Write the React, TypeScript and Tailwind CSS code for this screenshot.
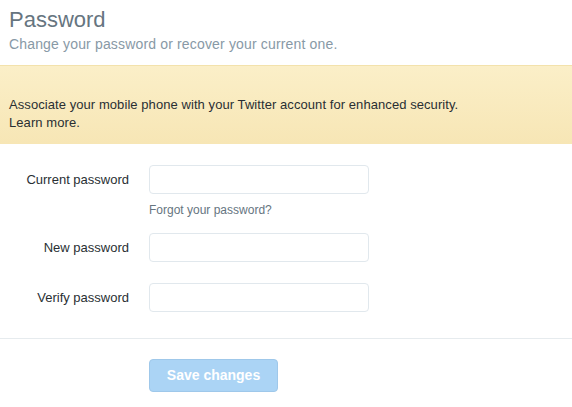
export default function App() {
  const font = { fontFamily: '"Liberation Sans", Arial, sans-serif' }

  return (
    <div className="w-[572px] h-[407px] bg-white overflow-hidden" style={font}>
      {/* Header */}
      <div className="pl-[9px] pt-[7px] pb-[12px]">
        <h1 className="text-[22px] leading-[26px] text-[#66757f]">Password</h1>
        <p className="mt-[2px] text-[14px] leading-[18px] tracking-[0.16px] text-[#8899a6]">
          Change your password or recover your current one.
        </p>
      </div>

      {/* Notice */}
      <div className="border-t border-[#f3e2ac] bg-gradient-to-b from-[#fbefc8] to-[#f7e6b5] pl-[9px] pt-[30px] pb-[12px] text-[13px] leading-[18px] tracking-[0.07px] text-[#292f33]">
        <p>Associate your mobile phone with your Twitter account for enhanced security.</p>
        <p>Learn more.</p>
      </div>

      {/* Form */}
      <div className="pt-[21px] pb-[26px] border-b border-[#e6ebee]">
        <div className="flex gap-[20px]">
          <label className="w-[129px] h-[29px] flex items-center justify-end text-[13px] text-[#292f33]">
            Current password
          </label>
          <div className="flex flex-col">
            <input type="password" className="w-[220px] h-[29px] rounded-[4px] border border-[#e1e8ed] bg-white outline-none" />
            <a className="mt-[8px] text-[12px] leading-[16px] text-[#66757f]">Forgot your password?</a>
          </div>
        </div>

        <div className="flex gap-[20px] mt-[15px]">
          <label className="w-[129px] h-[29px] flex items-center justify-end text-[13px] text-[#292f33]">
            New password
          </label>
          <input type="password" className="w-[220px] h-[29px] rounded-[4px] border border-[#e1e8ed] bg-white outline-none" />
        </div>

        <div className="flex gap-[20px] mt-[21px]">
          <label className="w-[129px] h-[29px] flex items-center justify-end text-[13px] text-[#292f33]">
            Verify password
          </label>
          <input type="password" className="w-[220px] h-[29px] rounded-[4px] border border-[#e1e8ed] bg-white outline-none" />
        </div>
      </div>

      {/* Save */}
      <div className="pt-[20px] pl-[149px]">
        <button
          disabled
          className="w-[129px] h-[33px] rounded-[4px] border border-[#9fc8ea] bg-[#abd4f5] text-white text-[14px] font-bold"
        >
          Save changes
        </button>
      </div>
    </div>
  )
}
